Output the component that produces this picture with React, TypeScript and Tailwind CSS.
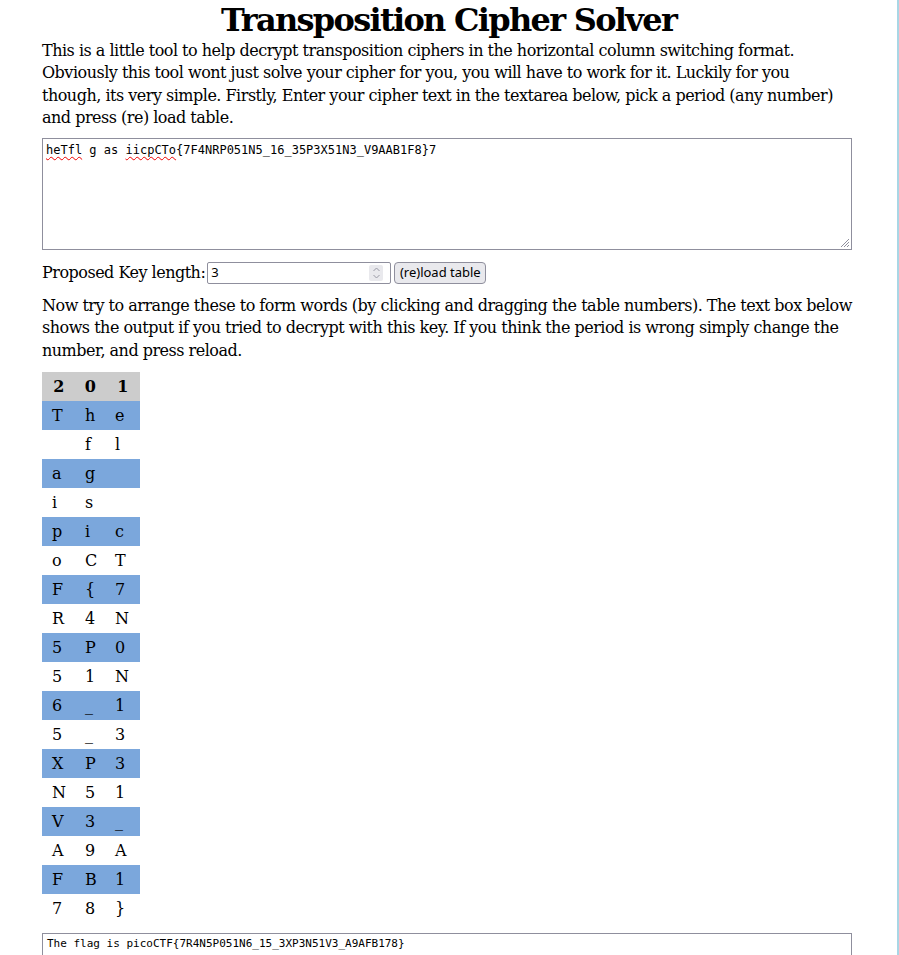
import React from "react";

const rows: string[][] = [
  ["T", "h", "e"],
  ["", "f", "l"],
  ["a", "g", ""],
  ["i", "s", ""],
  ["p", "i", "c"],
  ["o", "C", "T"],
  ["F", "{", "7"],
  ["R", "4", "N"],
  ["5", "P", "0"],
  ["5", "1", "N"],
  ["6", "_", "1"],
  ["5", "_", "3"],
  ["X", "P", "3"],
  ["N", "5", "1"],
  ["V", "3", "_"],
  ["A", "9", "A"],
  ["F", "B", "1"],
  ["7", "8", "}"],
];

const serif = { fontFamily: '"DejaVu Serif", "Liberation Serif", serif' };
const mono = { fontFamily: '"DejaVu Sans Mono", "Liberation Mono", monospace' };
const sans = { fontFamily: '"Noto Sans", "DejaVu Sans", sans-serif' };

export default function App() {
  return (
    <div className="min-h-[955px] w-[899px] bg-white text-black" style={serif}>
      <div className="box-content min-h-[955px] w-[897px] border-r-2 border-[#a9d6e5]">
        <h1 className="text-center text-[32px] font-bold leading-[40px] tracking-[-1.7px]">Transposition Cipher Solver</h1>
        <div className="ml-[42px] w-[810px]">
          <p className="text-[16px] leading-[22.3px] tracking-[-0.5px]">
            This is a little tool to help decrypt transposition ciphers in the horizontal column switching format. Obviously this tool wont just solve your cipher for you, you will have to work for it. Luckily for you though, its very simple. Firstly, Enter your cipher text in the textarea below, pick a period (any number) and press (re) load table.
          </p>
          <div className="relative mt-[9px] h-[112px] w-[810px] border border-[#8f8f9d] bg-white px-[3px] pt-[4px] text-[12px] leading-[15px]" style={mono}>
            <span className="underline decoration-wavy decoration-[#e00] decoration-1 underline-offset-2">heTfl</span> g as{" "}
            <span className="underline decoration-wavy decoration-[#e00] decoration-1 underline-offset-2">iicpCTo</span>
            {"{7F4NRP051N5_16_35P3X51N3_V9AAB1F8}7"}
            <svg className="absolute bottom-[1px] right-[1px]" width="11" height="11" viewBox="0 0 11 11">
              <path d="M10 2 L2 10 M10 5 L5 10 M10 8 L8 10" stroke="#8f8f9d" strokeWidth="1" />
            </svg>
          </div>
          <div className="mt-[12px] flex h-[22px] items-center text-[16px] tracking-[-0.5px]">
            <span>Proposed Key length:</span>
            <div className="relative ml-[2px] flex h-[22px] w-[184px] items-center rounded-[2px] border border-[#8f8f9d] bg-white pl-[3px] text-[13px] tracking-normal" style={sans}>
              3
              <div className="absolute right-[7px] top-[2px] flex h-[16px] w-[14px] items-center justify-center rounded-[2px] bg-[#e9e9ed]">
                <svg width="9" height="14" viewBox="0 0 9 14">
                  <path d="M1.5 5 L4.5 2 L7.5 5 M1.5 9 L4.5 12 L7.5 9" stroke="#9a9aa6" strokeWidth="1" fill="none" />
                </svg>
              </div>
            </div>
            <button className="ml-[3px] flex h-[22px] w-[92px] items-center justify-center rounded-[4px] border border-[#8f8f9d] bg-[#e9e9ed] text-[13px] tracking-normal" style={sans}>
              (re)load table
            </button>
          </div>
          <p className="mt-[11px] text-[16px] leading-[22.3px] tracking-[-0.5px]">
            Now try to arrange these to form words (by clicking and dragging the table numbers). The text box below shows the output if you tried to decrypt with this key. If you think the period is wrong simply change the number, and press reload.
          </p>
          <table className="mt-[10px] border-collapse text-[16px]">
            <thead>
              <tr className="h-[29px] bg-[#cccccc]">
                <th className="w-[33px] text-center tracking-[-0.5px]">2</th>
                <th className="w-[30px] text-center tracking-[-0.5px]">0</th>
                <th className="w-[35px] text-center tracking-[-0.5px]">1</th>
              </tr>
            </thead>
            <tbody>
              {rows.map((r, i) => (
                <tr key={i} className={i % 2 === 0 ? "h-[29px] bg-[#7ba7dc]" : "h-[29px] bg-white"}>
                  <td className="pl-[10px]">{r[0]}</td>
                  <td className="pl-[10px]">{r[1]}</td>
                  <td className="pl-[10px]">{r[2]}</td>
                </tr>
              ))}
            </tbody>
          </table>
          <div className="mt-[10px] h-[30px] w-[810px] border border-b-0 border-[#8f8f9d] px-[4px] py-[2px] text-[11px] leading-[16px]" style={mono}>
            {"The flag is picoCTF{7R4N5P051N6_15_3XP3N51V3_A9AFB178}"}
          </div>
        </div>
      </div>
    </div>
  );
}
